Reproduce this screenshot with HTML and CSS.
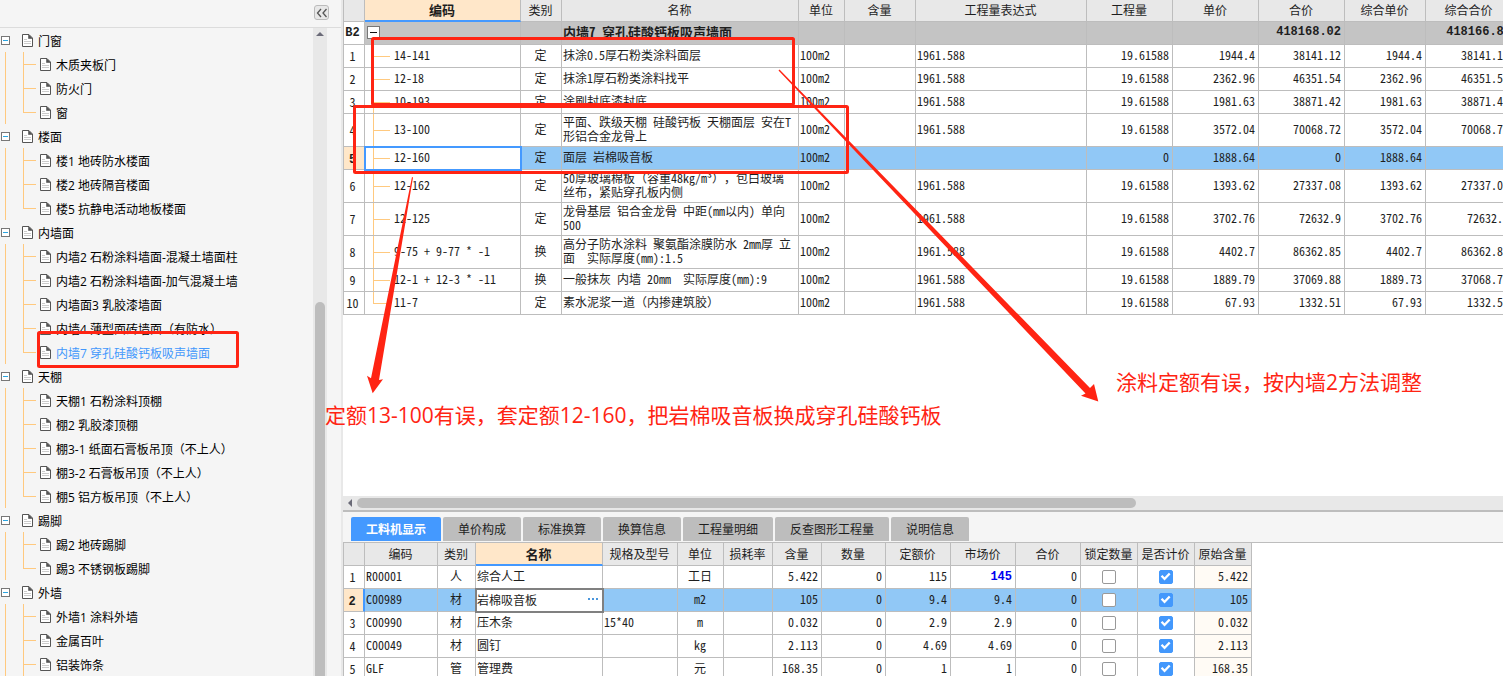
FILE: index.html
```html
<!DOCTYPE html>
<html lang="zh-CN">
<head>
<meta charset="utf-8">
<title>工料机显示</title>
<link rel="stylesheet" href="styles.css">
</head>
<body>
<svg class="defs" aria-hidden="true">
  <symbol id="doc" viewBox="0 0 11 13">
    <path d="M.5.5H7L10.500 4V12.500H.5z" fill="#fff" stroke="#555"/>
    <path d="M6.500.5V4.500H10.500z" fill="#555" stroke="#555" stroke-width=".6"/>
    <path d="M2 5.500H5M2 7.500H9M2 9.500H9" stroke="#ccc" fill="none"/>
  </symbol>
</svg>
<div class="app">
  <aside class="sidebar">
    <div class="side-head">
      <button class="collapse" type="button" aria-label="收起">
        <svg width="12" height="10" viewBox="0 0 12 10"><path d="M5 1 1.500 5 5 9M10.500 1 7 5 10.500 9" fill="none" stroke="#555" stroke-width="1.300"/></svg>
      </button>
    </div>
    <div class="side-body">
      <ul class="tree">
        <li><div class="group"><button type="button" class="fold" aria-label="折叠"></button><svg class="doc"><use href="#doc"/></svg>门窗</div>
          <ul>
            <li><svg class="doc"><use href="#doc"/></svg>木质夹板门</li>
            <li><svg class="doc"><use href="#doc"/></svg>防火门</li>
            <li><svg class="doc"><use href="#doc"/></svg>窗</li>
          </ul></li>
        <li><div class="group"><button type="button" class="fold" aria-label="折叠"></button><svg class="doc"><use href="#doc"/></svg>楼面</div>
          <ul>
            <li><svg class="doc"><use href="#doc"/></svg>楼1 地砖防水楼面</li>
            <li><svg class="doc"><use href="#doc"/></svg>楼2 地砖隔音楼面</li>
            <li><svg class="doc"><use href="#doc"/></svg>楼5 抗静电活动地板楼面</li>
          </ul></li>
        <li><div class="group"><button type="button" class="fold" aria-label="折叠"></button><svg class="doc"><use href="#doc"/></svg>内墙面</div>
          <ul>
            <li><svg class="doc"><use href="#doc"/></svg>内墙2 石粉涂料墙面-混凝土墙面柱</li>
            <li><svg class="doc"><use href="#doc"/></svg>内墙2 石粉涂料墙面-加气混凝土墙</li>
            <li><svg class="doc"><use href="#doc"/></svg>内墙面3 乳胶漆墙面</li>
            <li><svg class="doc"><use href="#doc"/></svg>内墙4 薄型面砖墙面（有防水）</li>
            <li class="current"><svg class="doc"><use href="#doc"/></svg>内墙7 穿孔硅酸钙板吸声墙面</li>
          </ul></li>
        <li><div class="group"><button type="button" class="fold" aria-label="折叠"></button><svg class="doc"><use href="#doc"/></svg>天棚</div>
          <ul>
            <li><svg class="doc"><use href="#doc"/></svg>天棚1 石粉涂料顶棚</li>
            <li><svg class="doc"><use href="#doc"/></svg>棚2 乳胶漆顶棚</li>
            <li><svg class="doc"><use href="#doc"/></svg>棚3-1 纸面石膏板吊顶（不上人）</li>
            <li><svg class="doc"><use href="#doc"/></svg>棚3-2 石膏板吊顶（不上人）</li>
            <li><svg class="doc"><use href="#doc"/></svg>棚5 铝方板吊顶（不上人）</li>
          </ul></li>
        <li><div class="group"><button type="button" class="fold" aria-label="折叠"></button><svg class="doc"><use href="#doc"/></svg>踢脚</div>
          <ul>
            <li><svg class="doc"><use href="#doc"/></svg>踢2 地砖踢脚</li>
            <li><svg class="doc"><use href="#doc"/></svg>踢3 不锈钢板踢脚</li>
          </ul></li>
        <li><div class="group"><button type="button" class="fold" aria-label="折叠"></button><svg class="doc"><use href="#doc"/></svg>外墙</div>
          <ul class="open-end">
            <li><svg class="doc"><use href="#doc"/></svg>外墙1 涂料外墙</li>
            <li><svg class="doc"><use href="#doc"/></svg>金属百叶</li>
            <li><svg class="doc"><use href="#doc"/></svg>铝装饰条</li>
          </ul></li>
      </ul>
      <div class="vscroll"><svg width="8" height="4" viewBox="0 0 8 4"><path d="M4 0 8 4H0z" fill="#6b6b78"/></svg><div class="vthumb"></div></div>
    </div>
  </aside>

  <main class="main">
    <section class="upper">
      <table class="grid quota">
        <colgroup><col class="w21"><col class="w156"><col class="w41"><col class="w237"><col class="w46"><col class="w71"><col class="w171"><col class="w86"><col class="w86"><col class="w86"><col class="w81"><col class="w87"></colgroup>
        <thead><tr><th></th><th class="active">编码</th><th>类别</th><th>名称</th><th>单位</th><th>含量</th><th>工程量表达式</th><th>工程量</th><th>单价</th><th>合价</th><th>综合单价</th><th>综合合价</th></tr></thead>
        <tbody>
          <tr class="total"><td class="no">B2</td><td><button type="button" class="minus" aria-label="折叠"></button></td><td></td><td class="title">内墙7 穿孔硅酸钙板吸声墙面</td><td></td><td></td><td></td><td></td><td></td><td class="n">418168.02</td><td></td><td class="n">418166.83</td></tr>
          <tr><td class="no">1</td><td class="code">14-141</td><td class="c">定</td><td>抹涂0.5厚石粉类涂料面层</td><td>100m2</td><td></td><td>1961.588</td><td class="n">19.61588</td><td class="n">1944.4</td><td class="n">38141.12</td><td class="n">1944.4</td><td class="n">38141.12</td></tr>
          <tr><td class="no">2</td><td class="code">12-18</td><td class="c">定</td><td>抹涂1厚石粉类涂料找平</td><td>100m2</td><td></td><td>1961.588</td><td class="n">19.61588</td><td class="n">2362.96</td><td class="n">46351.54</td><td class="n">2362.96</td><td class="n">46351.54</td></tr>
          <tr><td class="no">3</td><td class="code">10-193</td><td class="c">定</td><td>涂刷封底漆封底</td><td>100m2</td><td></td><td>1961.588</td><td class="n">19.61588</td><td class="n">1981.63</td><td class="n">38871.42</td><td class="n">1981.63</td><td class="n">38871.42</td></tr>
          <tr class="tall"><td class="no">4</td><td class="code">13-100</td><td class="c">定</td><td>平面、跌级天棚 硅酸钙板 天棚面层 安在T<br>形铝合金龙骨上</td><td>100m2</td><td></td><td>1961.588</td><td class="n">19.61588</td><td class="n">3572.04</td><td class="n">70068.72</td><td class="n">3572.04</td><td class="n">70068.72</td></tr>
          <tr class="sel"><td class="no">5</td><td class="code focus">12-160</td><td class="c">定</td><td>面层 岩棉吸音板</td><td>100m2</td><td></td><td></td><td class="n">0</td><td class="n">1888.64</td><td class="n">0</td><td class="n">1888.64</td><td class="n"></td></tr>
          <tr class="tall"><td class="no">6</td><td class="code">12-162</td><td class="c">定</td><td>50厚玻璃棉板（容重48kg/m³），包白玻璃<br>丝布，紧贴穿孔板内侧</td><td>100m2</td><td></td><td>1961.588</td><td class="n">19.61588</td><td class="n">1393.62</td><td class="n">27337.08</td><td class="n">1393.62</td><td class="n">27337.08</td></tr>
          <tr class="tall"><td class="no">7</td><td class="code">12-125</td><td class="c">定</td><td>龙骨基层 铝合金龙骨 中距(mm以内) 单向<br>500</td><td>100m2</td><td></td><td>1961.588</td><td class="n">19.61588</td><td class="n">3702.76</td><td class="n">72632.9</td><td class="n">3702.76</td><td class="n">72632.9</td></tr>
          <tr class="tall"><td class="no">8</td><td class="code">9-75 + 9-77 * -1</td><td class="c">换</td><td>高分子防水涂料 聚氨酯涂膜防水 2mm厚 立<br>面&nbsp; 实际厚度(mm):1.5</td><td>100m2</td><td></td><td>1961.588</td><td class="n">19.61588</td><td class="n">4402.7</td><td class="n">86362.85</td><td class="n">4402.7</td><td class="n">86362.85</td></tr>
          <tr><td class="no">9</td><td class="code">12-1 + 12-3 * -11</td><td class="c">换</td><td>一般抹灰 内墙 20mm&nbsp; 实际厚度(mm):9</td><td>100m2</td><td></td><td>1961.588</td><td class="n">19.61588</td><td class="n">1889.79</td><td class="n">37069.88</td><td class="n">1889.73</td><td class="n">37068.70</td></tr>
          <tr><td class="no">10</td><td class="code last">11-7</td><td class="c">定</td><td>素水泥浆一道（内掺建筑胶）</td><td>100m2</td><td></td><td>1961.588</td><td class="n">19.61588</td><td class="n">67.93</td><td class="n">1332.51</td><td class="n">67.93</td><td class="n">1332.51</td></tr>
        </tbody>
      </table>
    </section>
    <div class="hscroll"><svg width="4" height="8" viewBox="0 0 4 8"><path d="M4 0V8L0 4z" fill="#6b6b78"/></svg><div class="htrack"><div class="hthumb"></div></div></div>
    <nav class="tabs">
      <button type="button" class="tab on">工料机显示</button><button type="button" class="tab">单价构成</button><button type="button" class="tab">标准换算</button><button type="button" class="tab">换算信息</button><button type="button" class="tab">工程量明细</button><button type="button" class="tab">反查图形工程量</button><button type="button" class="tab">说明信息</button>
    </nav>
    <section class="lower">
      <table class="grid parts">
        <colgroup><col class="w21"><col class="w73"><col class="w38"><col class="w127"><col class="w75"><col class="w46"><col class="w49"><col class="w49"><col class="w64"><col class="w65"><col class="w65"><col class="w65"><col class="w57"><col class="w57"><col class="w57"></colgroup>
        <thead><tr><th></th><th>编码</th><th>类别</th><th class="active">名称</th><th>规格及型号</th><th>单位</th><th>损耗率</th><th>含量</th><th>数量</th><th>定额价</th><th>市场价</th><th>合价</th><th>锁定数量</th><th>是否计价</th><th>原始含量</th></tr></thead>
        <tbody>
          <tr><td class="no">1</td><td>R00001</td><td class="c">人</td><td>综合人工</td><td></td><td class="c">工日</td><td></td><td class="n">5.422</td><td class="n">0</td><td class="n">115</td><td class="n changed">145</td><td class="n">0</td><td class="c"><input type="checkbox" aria-label="锁定数量"></td><td class="c"><input type="checkbox" aria-label="是否计价" checked></td><td class="n orig">5.422</td></tr>
          <tr class="sel"><td class="no bar">2</td><td>C00989</td><td class="c">材</td><td class="edit"><div class="editor"><input type="text" aria-label="名称" value="岩棉吸音板"><button type="button" aria-label="选择"><i></i><i></i><i></i></button></div></td><td></td><td class="c">m2</td><td></td><td class="n">105</td><td class="n">0</td><td class="n">9.4</td><td class="n">9.4</td><td class="n">0</td><td class="c"><input type="checkbox" aria-label="锁定数量"></td><td class="c"><input type="checkbox" aria-label="是否计价" checked></td><td class="n orig">105</td></tr>
          <tr><td class="no">3</td><td>C00990</td><td class="c">材</td><td>压木条</td><td>15*40</td><td class="c">m</td><td></td><td class="n">0.032</td><td class="n">0</td><td class="n">2.9</td><td class="n">2.9</td><td class="n">0</td><td class="c"><input type="checkbox" aria-label="锁定数量"></td><td class="c"><input type="checkbox" aria-label="是否计价" checked></td><td class="n orig">0.032</td></tr>
          <tr><td class="no">4</td><td>C00049</td><td class="c">材</td><td>圆钉</td><td></td><td class="c">kg</td><td></td><td class="n">2.113</td><td class="n">0</td><td class="n">4.69</td><td class="n">4.69</td><td class="n">0</td><td class="c"><input type="checkbox" aria-label="锁定数量"></td><td class="c"><input type="checkbox" aria-label="是否计价" checked></td><td class="n orig">2.113</td></tr>
          <tr><td class="no">5</td><td>GLF</td><td class="c">管</td><td>管理费</td><td></td><td class="c">元</td><td></td><td class="n">168.35</td><td class="n">0</td><td class="n">1</td><td class="n">1</td><td class="n">0</td><td class="c"><input type="checkbox" aria-label="锁定数量"></td><td class="c"><input type="checkbox" aria-label="是否计价" checked></td><td class="n orig">168.35</td></tr>
        </tbody>
      </table>
    </section>
  </main>

  <svg class="marks" aria-hidden="true">
    <g fill="none" stroke="#ff2413" stroke-width="3">
      <rect x="372.500" y="38.500" width="421" height="66" rx="1"/>
      <rect x="354.500" y="106.500" width="493" height="66" rx="1"/>
      <rect x="38.500" y="332.500" width="199" height="34" rx="1"/>
    </g>
    <g fill="#ff2413">
      <path d="M412 177 371 378.300 367 375.700 372.700 393.300 383 379.300 379 380 413 177.500z"/>
      <path d="M778.500 70.500 1085.500 393.500 1081 395.700 1098.300 401.500 1094 384 1090 388 779.500 69.500z"/>
    </g>
  </svg>
  <p class="note note-a">定额13-100有误，套定额12-160，把岩棉吸音板换成穿孔硅酸钙板</p>
  <p class="note note-b">涂料定额有误，按内墙2方法调整</p>
</div>
</body>
</html>
```
FILE: styles.css
```css
* { box-sizing: border-box; }
body { margin: 0; background: #fff; color: #1e1e1e; font: 12px/14px "Open Sans", "Noto Sans CJK SC", sans-serif; text-spacing-trim: space-all; }
button { margin: 0; padding: 0; border: 0; font: inherit; color: inherit; }
ul { list-style: none; margin: 0; padding: 0; }
.defs { position: absolute; width: 0; height: 0; }
.app { position: relative; display: flex; height: 100vh; overflow: hidden; }

/* sidebar */
.sidebar { flex: none; width: 343px; display: flex; flex-direction: column; background: #f5f5f5; border-right: 2px solid #e8e8e8; color: #000; }
.side-head { flex: none; height: 28px; padding: 5px 12px 0 0; display: flex; justify-content: flex-end; border-bottom: 1px solid #dcdcdc; }
.collapse { width: 15px; height: 15px; display: flex; align-items: center; justify-content: center; border: 1px solid #bbb; border-radius: 3px; background: #e8e8e8; }
.side-body { flex: 1; min-height: 0; display: flex; padding-right: 14px; overflow: hidden; }
.tree { flex: 1; }
.group, .tree ul li { display: flex; align-items: center; height: 24px; padding-top: 3px; white-space: nowrap; }
.group { padding-left: 1px; }
.fold { width: 9px; height: 9px; margin: 0 12px 3px 0; border: 1px solid #777; background: linear-gradient(#2ba5e0, #2ba5e0) center / 5px 1px no-repeat #fff; }
.doc { flex: none; width: 11px; height: 13px; margin: 0 5px 3px 0; }
.tree ul { background: linear-gradient(#ffc97f, #ffc97f) 5px 0 / 1px 100% no-repeat; }
.tree ul li { padding-left: 40px; background: linear-gradient(#ffc97f, #ffc97f) 23px 0 / 1px 100% no-repeat, linear-gradient(#ffc97f, #ffc97f) 23px 12px / 13px 1px no-repeat; }
.tree ul li:last-child { background-size: 1px 12px, 13px 1px; }
.tree .open-end li:last-child { background-size: 1px 100%, 13px 1px; }
.tree .current { color: #4398fc; }
.vscroll { flex: none; width: 14px; display: flex; flex-direction: column; align-items: center; padding-top: 4px; background: #e8e8e8; }
.vthumb { flex: none; width: 10px; height: 58%; margin-top: auto; border-radius: 5px 5px 0 0; background: #bdbdbd; }

/* main */
.main { flex: 1; min-width: 0; display: flex; flex-direction: column; }
.upper { flex: 1; min-height: 0; overflow: hidden; }
.lower { flex: none; height: 134px; overflow: hidden; border-top: 1px solid #bdbdbd; }

.grid { table-layout: fixed; width: 0; border-collapse: separate; border-spacing: 0; border-left: 1px solid #bdbdbd; font-family: "Noto Sans Mono CJK SC", "Noto Sans CJK SC", monospace; }
.grid tr { height: 23px; }
.grid .tall { height: 33px; }
.quota thead tr { height: 22px; }
.grid th, .grid td { height: inherit; padding: 0 3px 2px 1px; border: solid #bdbdbd; border-width: 0 1px 1px 0; white-space: nowrap; text-align: left; }
.grid th { padding: 0 1px 0 0; background: #e8e8e8; font-weight: normal; text-align: center; }
.grid.quota th { padding-bottom: 2px; }
.grid th.active { background: #ffe7c9; border-bottom: 2px solid #4499ff; font-weight: bold; font-size: 13px; }
.grid.quota th.active { padding-bottom: 0; }
.grid .no { padding: 0 3px 0 0; text-align: center; }
.grid .c { text-align: center; padding: 0 2px 2px 1px; }
.grid .n { text-align: right; }
.grid .code { padding-left: 29px; background: linear-gradient(#ffc97f, #ffc97f) 8px 0 / 1px 100% no-repeat, linear-gradient(#ffc97f, #ffc97f) 8px 50% / 17px 1px no-repeat; }
.grid .code.last { background-size: 1px 50%, 17px 1px; }
.total td { background: #c4c4c4; font: bold 12px/14px "Liberation Mono", monospace; }
.grid .total .no { background: #fff; }
.grid .total .title { font: bold 13px/14px "Noto Sans Mono CJK SC", "Noto Sans CJK SC", monospace; }
.grid .total td:last-child { padding-right: 1px; }
.minus { display: block; width: 13px; height: 13px; margin-left: 1px; border: 1px solid #777; background: linear-gradient(#111, #111) center / 7px 1px no-repeat #fff; }
.sel td { background: #91c8f6; }
.grid .sel .no { padding-top: 3px; background: #ffe7c9; font: bold 12px/14px "Liberation Mono", monospace; }
.grid .sel .bar { border-right: 2px solid #4499ff; }
.grid .sel .focus { background-color: #fff; outline: 2px solid #4499ff; outline-offset: -1px; }
.grid .changed { padding-bottom: 0; color: #0000f0; font: bold 12px/14px "Liberation Mono", monospace; }
.orig { background: #fffbf5; }
.grid .sel .edit { padding: 0 0 2px; background: #fff; outline: 2px solid #808080; outline-offset: -1px; }
.editor { display: flex; align-items: center; padding: 0 4px 0 1px; }
.editor input { flex: 1; min-width: 0; height: 16px; padding: 0; border: 0; outline: 0; background: none; font: inherit; color: inherit; }
.editor button { display: flex; gap: 2px; background: none; }
.editor i { width: 2px; height: 2px; background: #4a96dc; }

input[type="checkbox"] { appearance: none; display: block; width: 14px; height: 14px; margin: 1px auto 0; border: 1px solid #999; border-radius: 2px; background: #fff; }
input[type="checkbox"]:checked { border-color: #4398fc; background: #4398fc; }
input[type="checkbox"]:checked::after { content: ""; display: block; width: 12px; height: 12px; background: #fff; clip-path: polygon(10% 50%, 24% 38%, 42% 56%, 78% 18%, 92% 32%, 42% 84%); }

.hscroll { flex: none; height: 16px; display: flex; align-items: center; gap: 5px; padding-left: 5px; background: #e8e8e8; border-bottom: 2px solid #bdbdbd; }
.htrack { flex: 1; }
.hthumb { width: 68%; height: 10px; border-radius: 5px; background: #bdbdbd; }

.tabs { flex: none; display: flex; gap: 2px; padding: 5px 8px 1px; background: #f5f5f5; }
.tab { height: 24px; padding: 2px 15px 0; border-radius: 2px 2px 0 0; background: #bdbdbd; }
.tab.on { background: #4499ff; color: #fff; font-weight: bold; }

/* column widths */
.w21 { width: 21px; } .w38 { width: 38px; } .w41 { width: 41px; } .w46 { width: 46px; }
.w49 { width: 49px; } .w57 { width: 57px; } .w64 { width: 64px; } .w65 { width: 65px; }
.w71 { width: 71px; } .w73 { width: 73px; } .w75 { width: 75px; } .w81 { width: 81px; }
.w86 { width: 86px; } .w87 { width: 87px; } .w127 { width: 127px; } .w156 { width: 156px; }
.w171 { width: 171px; } .w237 { width: 237px; }

/* review marks drawn over the window */
.marks { position: absolute; left: 0; top: 0; width: 100%; height: 100%; pointer-events: none; }
.note { position: absolute; margin: 0; color: #ff2413; font-size: 21px; line-height: 28px; white-space: nowrap; }
.note-a { left: 325px; top: 401px; }
.note-b { left: 1116px; top: 368px; }
```
